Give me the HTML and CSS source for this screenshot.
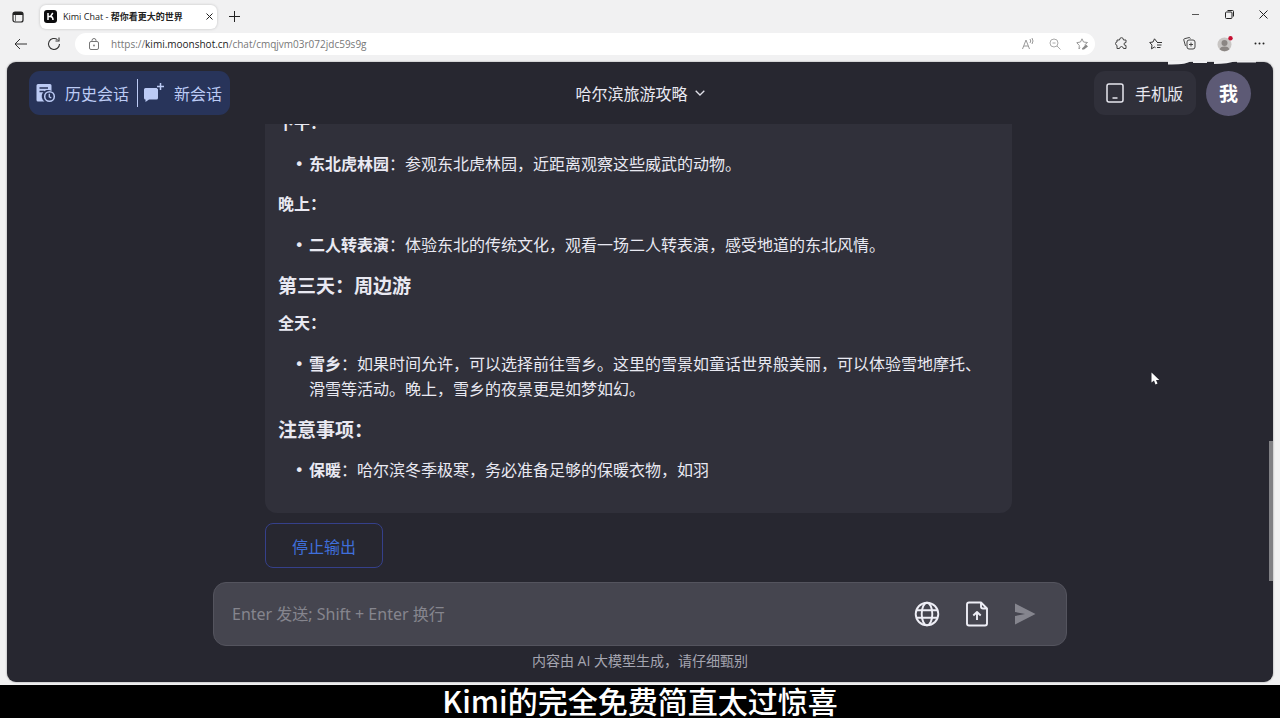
FILE: index.html
```
<!DOCTYPE html>
<html lang="zh-CN">
<head>
<meta charset="utf-8">
<title>Kimi Chat - 帮你看更大的世界</title>
<link rel="stylesheet" href="styles.css">
</head>
<body>

<header class="browser">
  <div class="tab-bar">
    <button class="chrome-btn tab-menu" aria-label="标签页菜单">
      <svg width="12" height="12" viewBox="0 0 12 12"><rect x="1" y="1" width="10" height="10" rx="2" fill="none" stroke="#222" stroke-width="1.2"/><path d="M1 4V2.5Q1 1 2.500 1H9.500Q11 1 11 2.500V4Z" fill="#222"/><path d="M3.500 4V11" stroke="#777"/></svg>
    </button>
    <div class="tab">
      <svg width="13" height="13" viewBox="0 0 13 13"><rect width="13" height="13" rx="3" fill="#0b0b0d"/><path d="M4 3V10M4 6.500H7M8.800 3L6.500 6.500Q9 6.500 9 10" fill="none" stroke="#fff" stroke-width="1.500"/></svg>
      <span class="tab-title">Kimi Chat - <b>帮你看更大的世界</b></span>
      <button class="chrome-btn" aria-label="关闭标签页">
        <svg width="7" height="7" viewBox="0 0 7 7"><path d="M.5 .5L6.500 6.500M6.500 .5L.5 6.500" stroke="#222"/></svg>
      </button>
    </div>
    <button class="chrome-btn" aria-label="新建标签页">
      <svg width="11" height="11" viewBox="0 0 11 11"><path d="M5.500 0V11M0 5.500H11" stroke="#222"/></svg>
    </button>
    <div class="window-buttons">
      <button class="chrome-btn" aria-label="最小化"><svg width="9" height="9" viewBox="0 0 9 9"><path d="M1 4.500H8" stroke="#555"/></svg></button>
      <button class="chrome-btn" aria-label="还原"><svg width="9" height="9" viewBox="0 0 9 9"><rect x=".5" y="2" width="6.500" height="6.500" rx="1" fill="none" stroke="#222"/><path d="M2.500 .5H7.500Q8.500 .5 8.500 1.500V6.500" fill="none" stroke="#222"/></svg></button>
      <button class="chrome-btn" aria-label="关闭"><svg width="9" height="9" viewBox="0 0 9 9"><path d="M.5 .5L8.500 8.500M8.500 .5L.5 8.500" stroke="#222"/></svg></button>
    </div>
  </div>

  <div class="nav-bar">
    <button class="chrome-btn" aria-label="后退"><svg width="13" height="12" viewBox="0 0 13 12"><path d="M13 6H1M6 1L1 6L6 11" fill="none" stroke="#333"/></svg></button>
    <button class="chrome-btn" aria-label="刷新"><svg width="14" height="14" viewBox="0 0 14 14"><path d="M12.500 7A5.500 5.500 0 1 1 10.500 2.700M12 .5V4H8.500" fill="none" stroke="#333" stroke-width="1.100"/></svg></button>
    <div class="address">
      <svg width="10" height="12" viewBox="0 0 10 12"><rect x=".5" y="3.500" width="9" height="8" rx="1.500" fill="none" stroke="#777"/><path d="M3 3.500V2.500A2 2 0 0 1 7 2.500V3.500" fill="none" stroke="#777"/><circle cx="5" cy="7.500" r=".9" fill="#777"/></svg>
      <span class="url">https://<span class="host">kimi.moonshot.cn</span>/chat/cmqjvm03r072jdc59s9g</span>
      <div class="address-tools">
        <button class="chrome-btn" aria-label="朗读"><svg width="12" height="12" viewBox="0 0 12 12"><path d="M.5 11L4 2L7.500 11M2 8H6M8 1Q9.500 3 8 5M10 0Q12 3 10 6" fill="none" stroke="#999"/></svg></button>
        <button class="chrome-btn" aria-label="缩放"><svg width="12" height="12" viewBox="0 0 12 12"><circle cx="5" cy="5" r="4" fill="none" stroke="#aaa"/><path d="M8 8L11.500 11.500M3.500 5H6.500" stroke="#aaa"/></svg></button>
        <button class="chrome-btn" aria-label="收藏"><svg width="13" height="12" viewBox="0 0 13 12"><path d="M6 .8L7.500 4L11.500 4.500L8.500 7M4 9.500L3 11L3.300 7.500L.8 4.700L4.500 4L6 .8" fill="none" stroke="#999"/><path d="M6 10.500L10 6.500L12 8.500L8 11.500H6Z" fill="#888"/></svg></button>
      </div>
    </div>
    <div class="nav-tools">
      <button class="chrome-btn" aria-label="扩展"><svg width="13" height="13" viewBox="0 0 13 13"><path d="M2 3H4.500Q4.500 .7 6.500 .7T8.500 3H11V5.500Q9 5.500 9 7T11 8.500V11.500H8.500Q8 9.500 6.500 9.500T4.500 11.500H2V8.500Q.5 8 .5 6.500T2 5Z" fill="none" stroke="#444"/></svg></button>
      <button class="chrome-btn" aria-label="收藏夹"><svg width="13" height="12" viewBox="0 0 13 12"><path d="M8 4L5.500 .8L4 4L.7 4.500L3 7L2.500 10.800L5.500 9L6.500 9.700M8 4.500H13M8 7H12.500M8 9.500H11.500" fill="none" stroke="#333"/></svg></button>
      <button class="chrome-btn" aria-label="集锦"><svg width="13" height="13" viewBox="0 0 13 13"><path d="M2.500 9L.8 3Q.5 2 1.500 1.700L6 .6Q7 .5 7.500 1.500" fill="none" stroke="#444"/><rect x="4" y="3" width="8" height="9" rx="2" fill="none" stroke="#444"/><path d="M8 5.500V9.500M6 7.500H10" stroke="#444"/></svg></button>
      <button class="chrome-btn" aria-label="个人资料"><svg width="16" height="16" viewBox="0 0 16 16"><circle cx="7.500" cy="8.500" r="7" fill="#c8c5c3"/><circle cx="7.500" cy="7" r="3" fill="#8b8683"/><path d="M2.800 13.500Q3 10.500 7.500 10.500T12.200 13.500Q7.500 17 2.800 13.500Z" fill="#8b8683"/><circle cx="13.500" cy="2.200" r="2.200" fill="#c50f32"/></svg></button>
      <button class="chrome-btn" aria-label="更多"><svg width="11" height="3" viewBox="0 0 11 3"><circle cx="1.500" cy="1.500" r="1" fill="#222"/><circle cx="5.500" cy="1.500" r="1" fill="#222"/><circle cx="9.500" cy="1.500" r="1" fill="#222"/></svg></button>
    </div>
  </div>
</header>

<main class="app">
  <div class="topbar">
    <div class="topbar-left">
      <div class="session-group">
        <button class="session-btn">
          <svg width="20" height="20" viewBox="0 0 20 20"><path d="M2 1H14Q15.500 1 15.500 2.500V8A6 6 0 0 0 8.500 18.500H2Q.5 18.500 .5 17V2.500Q.5 1 2 1Z" fill="#bccbf5"/><path d="M3.500 5H12M3.500 8.500H8" stroke="#28345a" stroke-width="1.300"/><circle cx="13.500" cy="13.500" r="4.800" fill="#28345a" stroke="#bccbf5" stroke-width="1.500"/><path d="M13.300 10.800V13.800L15.300 15" fill="none" stroke="#bccbf5" stroke-width="1.300"/></svg>
          历史会话
        </button>
        <button class="session-btn">
          <svg width="20" height="20" viewBox="0 0 20 20"><path d="M1.500 5H12.500Q14 5 14 6.500V15Q14 16.500 12.500 16.500H5L1.500 19V16.500Q0 16.500 0 15V6.500Q0 5 1.500 5Z" fill="#bccbf5"/><path d="M16.500 0V7M13 3.500H20" stroke="#28345a" stroke-width="4"/><path d="M16.500 0V7M13 3.500H20" stroke="#bccbf5" stroke-width="1.500"/></svg>
          新会话
        </button>
      </div>
    </div>
    <button class="chat-title">
      哈尔滨旅游攻略
      <svg width="10" height="6" viewBox="0 0 10 6"><path d="M.7 .7L5 5L9.300 .7" fill="none" stroke="#e0e0e8" stroke-width="1.300"/></svg>
    </button>
    <div class="topbar-right">
      <button class="phone-btn">
        <svg width="18" height="20" viewBox="0 0 18 20"><rect x="1" y="1" width="16" height="18" rx="2" fill="none" stroke="#e6e6ee" stroke-width="1.500"/><path d="M6.500 15H11.500" stroke="#e6e6ee" stroke-width="1.500"/></svg>
        手机版
      </button>
      <button class="avatar">我</button>
    </div>
  </div>

  <section class="messages">
    <article class="message">
      <p><strong>下午：</strong></p>
      <ul>
        <li><strong>东北虎林园</strong>：参观东北虎林园，近距离观察这些威武的动物。</li>
      </ul>
      <p><strong>晚上：</strong></p>
      <ul>
        <li><strong>二人转表演</strong>：体验东北的传统文化，观看一场二人转表演，感受地道的东北风情。</li>
      </ul>
      <h3>第三天：周边游</h3>
      <p><strong>全天：</strong></p>
      <ul>
        <li><strong>雪乡</strong>：如果时间允许，可以选择前往雪乡。这里的雪景如童话世界般美丽，可以体验雪地摩托、滑雪等活动。晚上，雪乡的夜景更是如梦如幻。</li>
      </ul>
      <h3>注意事项：</h3>
      <ul>
        <li><strong>保暖</strong>：哈尔滨冬季极寒，务必准备足够的保暖衣物，如羽</li>
      </ul>
    </article>
    <button class="stop-btn">停止输出</button>
  </section>

  <form class="composer">
    <input class="composer-input" type="text" aria-label="消息" placeholder="Enter 发送; Shift + Enter 换行">
    <button class="icon-btn" type="button" aria-label="联网搜索">
      <svg width="26" height="26" viewBox="0 0 26 26"><g fill="none" stroke="#eeeef6" stroke-width="1.900"><circle cx="13" cy="13" r="11.300"/><ellipse cx="13" cy="13" rx="5.300" ry="11.300"/><path d="M2.500 9.300H23.500M2.500 16.700H23.500"/></g></svg>
    </button>
    <button class="icon-btn" type="button" aria-label="上传文件">
      <svg width="22" height="26" viewBox="0 0 22 26"><g fill="none" stroke="#eeeef6" stroke-width="1.900" stroke-linejoin="round"><path d="M15 1.500H3Q1 1.500 1 3.500V22.500Q1 24.500 3 24.500H19Q21 24.500 21 22.500V7.500L15 1.500V5.500Q15 7.500 17 7.500H21"/><path d="M11 19V11.500M7.300 14.500L11 11L14.700 14.500"/></g></svg>
    </button>
    <button class="icon-btn" type="submit" aria-label="发送">
      <svg width="22" height="22" viewBox="0 0 22 22"><path d="M1 .5L21.500 11L1 21.500V13L11 11L1 9Z" fill="#85858e"/></svg>
    </button>
  </form>
  <p class="disclaimer">内容由 AI 大模型生成，请仔细甄别</p>

  <div class="scroll-thumb"></div>
  <svg class="cursor" width="9" height="13" viewBox="0 0 9 13"><path d="M.5 .5V10.500L3 8.500L4.500 12.500L6.500 11.500L5 8H8.300Z" fill="#fff"/></svg>
</main>

<!-- lower edge of the overlay logo, the rest is lost against the light chrome -->
<svg class="watermark" width="88" height="4" viewBox="0 0 88 4">
  <path d="M0 0H23Q18 4 0 3.500ZM25 0H39V2H25ZM46 0H67Q61 3 46 3ZM69 0H88V1.500H69Z" fill="#efeff1"/>
</svg>

<footer class="subtitle">Kimi的完全免费简直太过惊喜</footer>

</body>
</html>
```
FILE: styles.css
```
* {
  box-sizing: border-box;
}

body {
  position: relative;
  margin: 0;
  height: 100vh;
  display: flex;
  flex-direction: column;
  overflow: hidden;
  background: #f1f1f2;
  font-family: "Open Sans", "Noto Sans CJK SC", sans-serif;
}

button {
  display: flex;
  align-items: center;
  padding: 0;
  border: 0;
  background: none;
  font: inherit;
  color: inherit;
}

svg {
  display: block;
  flex: none;
}

/* browser chrome */
.browser {
  flex: none;
  height: 62px;
  color: #222;
}

.tab-bar {
  display: flex;
  align-items: center;
  height: 33px;
  padding: 0 12px;
}

.tab-menu {
  margin-right: 16px;
}

.tab {
  display: flex;
  align-items: center;
  width: 177px;
  height: 24px;
  margin-right: 12px;
  padding: 0 4px;
  border-radius: 6px;
  background: #fff;
  box-shadow: 0 0 3px rgba(0, 0, 0, 0.2);
  font-size: 9px;
}

.tab-title {
  flex: 1;
  margin-left: 6px;
}

.window-buttons {
  display: flex;
  gap: 25px;
  margin-left: auto;
  padding-bottom: 4px;
}

.nav-bar {
  display: flex;
  align-items: center;
  height: 21px;
  padding: 0 15px 0 14px;
}

.nav-bar > .chrome-btn {
  margin-right: 20px;
}

.address {
  display: flex;
  flex: 1;
  align-items: center;
  height: 22px;
  margin-left: -6px;
  padding: 0 6px 0 14px;
  border-radius: 11px;
  background: #fff;
}

.url {
  margin-left: 12px;
  font-size: 10px;
  color: #777;
}

.host {
  color: #222;
}

.address-tools {
  display: flex;
  gap: 15px;
  margin-left: auto;
}

.nav-tools {
  display: flex;
  align-items: center;
  gap: 21px;
  margin-left: 20px;
}

/* chat app */
.app {
  position: relative;
  flex: 1;
  min-height: 0;
  display: flex;
  flex-direction: column;
  align-items: center;
  margin: 0 7px 3px;
  border-radius: 9px;
  background: #272730;
  box-shadow: 0 0 2px #888;
  color: #e9e9f2;
  font-size: 16px;
}

.topbar {
  display: flex;
  flex: none;
  align-items: center;
  width: 100%;
  height: 62px;
  padding: 0 22px;
}

.topbar-left,
.topbar-right {
  display: flex;
  flex: 1;
}

.topbar-right {
  justify-content: flex-end;
  gap: 10px;
}

.session-group {
  display: flex;
  align-items: center;
  height: 44px;
  padding: 0 8px 0 7px;
  border-radius: 11px;
  background: #28345a;
  color: #bccbf5;
}

.session-btn {
  gap: 9px;
  height: 28px;
}

.session-btn + .session-btn {
  margin-left: 8px;
  padding-left: 6px;
  border-left: 1px solid #bccbf5;
  gap: 10px;
}

.chat-title {
  gap: 7px;
}

.phone-btn {
  gap: 11px;
  height: 44px;
  padding: 0 13px 0 12px;
  border-radius: 11px;
  background: #30303a;
}

.avatar {
  justify-content: center;
  width: 45px;
  height: 45px;
  border-radius: 50%;
  background: #5d5a75;
  color: #fff;
  font-size: 19px;
  font-weight: bold;
}

.messages {
  flex: 1;
  min-height: 0;
  display: flex;
  flex-direction: column;
  justify-content: flex-end;
  align-items: flex-start;
  width: 750px;
  max-width: 100%;
  padding-right: 3px;
  overflow: hidden;
}

.message {
  flex: none;
  width: 100%;
  padding: 16px 20px 31px 13px;
  border-radius: 12px;
  background: #30303a;
  font-family: "Noto Sans CJK SC", sans-serif;
  line-height: 25px;
}

.message p {
  margin: 13px 0 15px;
}

.message ul {
  margin: 16px 0 15px;
  padding-left: 31px;
  list-style-type: "• ";
}

.message li::marker {
  font-family: "DejaVu Sans", sans-serif;
}

.message ul:last-child {
  margin-bottom: 0;
}

.message h3 {
  margin: 15px 0 13px;
  font-size: 19px;
}

.stop-btn {
  flex: none;
  height: 45px;
  margin: 10px 0 14px;
  padding: 0 26px;
  border: 1px solid #35408a;
  border-radius: 8px;
  color: #3f6fdc;
}

.composer {
  display: flex;
  flex: none;
  align-items: center;
  gap: 26px;
  width: 854px;
  max-width: 100%;
  height: 64px;
  padding: 0 30px 0 18px;
  border: 1px solid #54545e;
  border-radius: 13px;
  background: #45454f;
}

.composer-input {
  flex: 1;
  min-width: 0;
  padding: 0;
  border: 0;
  outline: 0;
  background: none;
  font: 16px "Noto Sans", "Noto Sans CJK SC", sans-serif;
  color: #eeeef6;
}

.composer-input::placeholder {
  color: #85858e;
}

.disclaimer {
  flex: none;
  margin: 5px 0 11px;
  font-size: 14px;
  line-height: 20px;
  color: #a5a5b0;
}

.scroll-thumb {
  position: absolute;
  right: 0;
  bottom: 101px;
  width: 4px;
  height: 140px;
  background: #808084;
}

.cursor {
  position: absolute;
  top: 310px;
  right: 113px;
}

.watermark {
  position: absolute;
  top: 61px;
  right: 24px;
  pointer-events: none;
}

.subtitle {
  flex: none;
  height: 33px;
  background: #000;
  color: #fff;
  font: 500 30px/31px "Noto Sans CJK SC", sans-serif;
  text-align: center;
}
```
